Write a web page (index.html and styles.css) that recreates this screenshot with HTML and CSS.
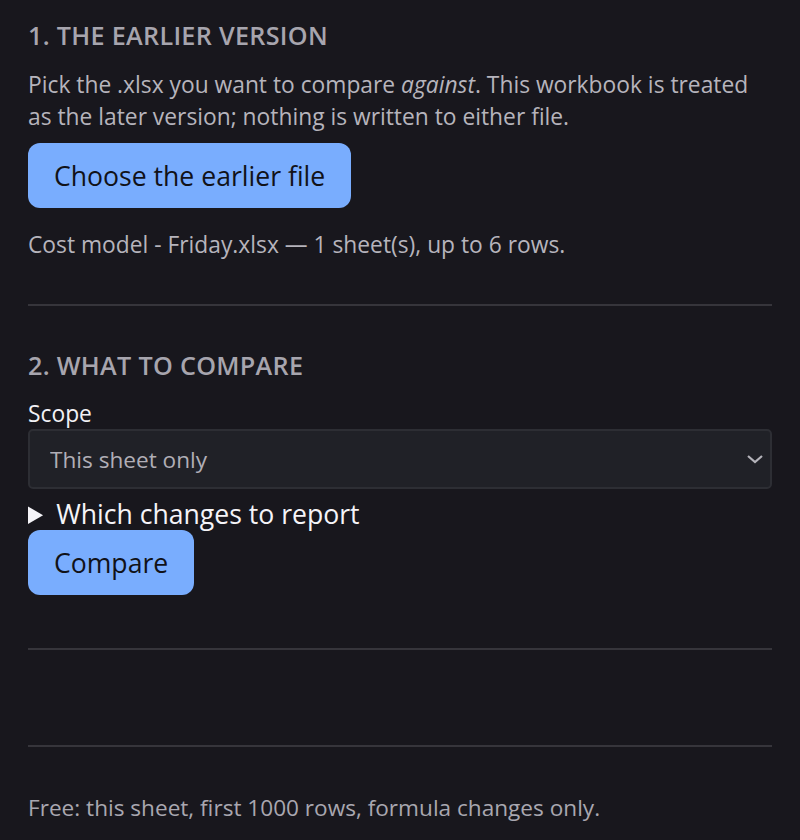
FILE: index.html
```html
<!DOCTYPE html>
<html lang="en">
<head>
  <meta charset="UTF-8" />
  <meta name="viewport" content="width=device-width, initial-scale=1.0"/>
  <title>Compare workbooks</title>
  <link rel="stylesheet" href="styles.css">
</head>
<body>
  <!-- STEP 1: PICK THE EARLIER FILE -->
  <section class="step step-pick">
    <h2>1. The earlier version</h2>
    <p class="intro">Pick the .xlsx you want to compare <em>against</em>. This workbook is treated as the later version; nothing is written to either file.</p>
    <button class="btn">Choose the earlier file</button>
    <p class="status">Cost model - Friday.xlsx — 1 sheet(s), up to 6 rows.</p>
  </section>

  <!-- STEP 2: OPTIONS -->
  <section class="step step-options">
    <h2>2. What to compare</h2>
    <label class="field-label" for="scope">Scope</label>
    <div class="select-wrap">
      <select id="scope">
        <option>This sheet only</option>
        <option>All sheets</option>
      </select>
      <svg class="chevron" width="18" height="12" viewBox="0 0 18 12">
        <path d="M2 3 L9 9 L16 3" fill="none" stroke="#b4b3ba" stroke-width="2.2"/>
      </svg>
    </div>
    <details class="changes">
      <summary>Which changes to report</summary>
    </details>
    <button class="btn">Compare</button>
  </section>

  <!-- RESULTS -->
  <section class="step step-results"></section>

  <footer class="plan-note">Free: this sheet, first 1000 rows, formula changes only.</footer>
</body>
</html>
```

FILE: styles.css
```css
body {
  margin: 0;
  padding: 0 28px;
  background-color: #18171d;
  font-family: "Open Sans", "Noto Sans", sans-serif;
  color: #b6b4bc;
}

.step {
  border-bottom: 2px solid #36353b;
}

.step h2 {
  margin: 0;
  font-size: 25.2px;
  line-height: 30px;
  font-weight: 600;
  text-transform: uppercase;
  letter-spacing: 0.3px;
  color: #a7a5ae;
}

.step-pick {
  padding: 20px 0 43px;
}

.intro {
  margin: 19px 0 10px;
  font-size: 22.8px;
  line-height: 32px;
}

.btn {
  display: block;
  padding: 0 26px;
  height: 65px;
  background-color: #79adfe;
  color: #111218;
  border: none;
  border-radius: 12px;
  font-family: inherit;
  font-size: 26.6px;
  cursor: pointer;
}

.status {
  margin: 21px 0 0;
  font-size: 22.8px;
  line-height: 32px;
}

.step-options {
  padding: 44px 0 53px;
}

.field-label {
  display: block;
  margin-top: 21px;
  font-size: 22.8px;
  line-height: 26px;
  color: #f2f1f5;
}

.select-wrap {
  position: relative;
  margin-top: 2px;
}

.select-wrap select {
  display: block;
  width: 100%;
  height: 60px;
  padding: 0 20px;
  background-color: #202127;
  color: #b0aeb6;
  border: 2px solid #2d2e34;
  border-radius: 5px;
  font-family: inherit;
  font-size: 22.6px;
  appearance: none;
}

.chevron {
  position: absolute;
  top: 24px;
  right: 8px;
  pointer-events: none;
}

.changes {
  margin-top: 9px;
}

.changes summary {
  font-size: 26.6px;
  line-height: 32px;
  color: #f5f4f8;
  cursor: pointer;
}

.step-results {
  height: 95px;
}

.plan-note {
  margin-top: 45px;
  font-size: 22.6px;
  line-height: 32px;
  color: #a9a7b0;
}
```
